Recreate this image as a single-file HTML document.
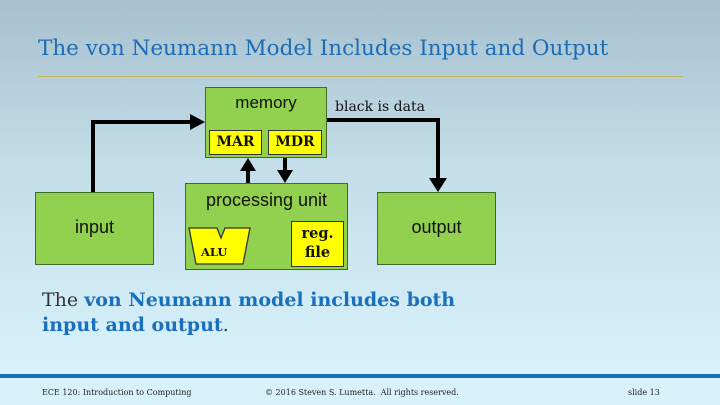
<!DOCTYPE html>
<html><head><style>
body{margin:0;width:720px;height:405px;overflow:hidden;position:relative;font-family:"DejaVu Serif",serif;
background:linear-gradient(#a8c1ce 0%,#c2dce8 40%,#d6f0fa 85%,#d8f2fc 100%);}
.a{position:absolute;white-space:nowrap}
.box{position:absolute;background:#92d050;border:1.5px solid #3f6a2a;box-sizing:border-box;font-family:"Liberation Sans",sans-serif;color:#111;text-align:center}
.y{position:absolute;background:#ffff00;border:1.5px solid #333;box-sizing:border-box;font-weight:bold;font-family:"DejaVu Serif",serif;color:#111;text-align:center}
</style></head><body>
<div class="a" style="left:38px;top:36px;font-size:21.5px;color:#1c6db5">The von Neumann Model Includes Input and Output</div>
<div class="a" style="left:38px;top:76px;width:645px;height:1px;background:#c8b45a"></div>
<div class="box" style="left:205px;top:87px;width:122px;height:71px;font-size:17px;padding-top:5px">memory</div>
<div class="y" style="left:209px;top:130px;width:53px;height:25px;font-size:14px;line-height:23px">MAR</div>
<div class="y" style="left:268px;top:130px;width:54px;height:25px;font-size:14px;line-height:23px">MDR</div>
<div class="box" style="left:185px;top:183px;width:163px;height:87px;font-size:18px;padding-top:6px">processing unit</div>
<svg class="a" style="left:0;top:0" width="720" height="405">
<polygon points="189,228 217,228 221,238 225,228 250,228 243,264 196,264" fill="#ffff00" stroke="#333" stroke-width="1.3"/>
<g stroke="#000" stroke-width="4" fill="none">
<polyline points="93,192 93,122 192,122"/>
<polyline points="327,120 438,120 438,180"/>
<line x1="248" y1="183" x2="248" y2="170"/>
<line x1="285" y1="158" x2="285" y2="171"/>
</g>
<polygon points="190,114 205,122 190,130" fill="#000"/>
<polygon points="429,178 447,178 438,192" fill="#000"/>
<polygon points="240,171 256,171 248,158" fill="#000"/>
<polygon points="277,170 293,170 285,183" fill="#000"/>
</svg>
<div class="a" style="left:201px;top:245px;font-size:11.5px;font-weight:bold;color:#111">ALU</div>
<div class="y" style="left:291px;top:221px;width:53px;height:46px;font-size:14.5px;line-height:19px;padding-top:2px">reg.<br>file</div>
<div class="a" style="left:335px;top:99px;font-size:14px;color:#111">black is data</div>
<div class="box" style="left:35px;top:192px;width:119px;height:73px;font-size:18px;line-height:68px">input</div>
<div class="box" style="left:377px;top:192px;width:119px;height:73px;font-size:18px;line-height:68px">output</div>
<div class="a" style="left:42px;top:288px;font-size:19px;line-height:25px;color:#333">The <b style="color:#1a70bc">von Neumann model includes both<br>input and output</b>.</div>
<div class="a" style="left:0;top:374px;width:720px;height:4px;background:#1a70b8"></div>
<div class="a" style="left:42px;top:388px;font-size:8px;color:#222">ECE 120: Introduction to Computing</div>
<div class="a" style="left:265px;top:388px;font-size:8px;color:#222">© 2016 Steven S. Lumetta.&nbsp; All rights reserved.</div>
<div class="a" style="left:628px;top:388px;font-size:8px;color:#222">slide 13</div>
</body></html>
